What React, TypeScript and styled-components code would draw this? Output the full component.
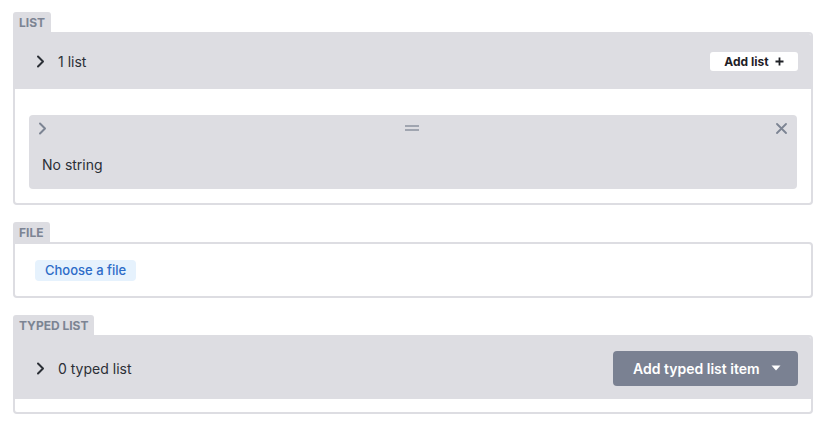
import React from 'react';
import styled, { createGlobalStyle } from 'styled-components';

const GlobalStyle = createGlobalStyle`
  *, *::before, *::after {
    box-sizing: border-box;
  }
  body {
    margin: 0;
    background: #ffffff;
    font-family: Inter, "Liberation Sans", sans-serif;
    color: #2b2f36;
  }
`

const Page = styled.div`
  width: 824px;
  padding: 12px 11px 0 13px;
  display: flex;
  flex-direction: column;
  gap: 17px;
`

const Field = styled.section`
  display: flex;
  flex-direction: column;
  align-items: flex-start;
`

const Tag = styled.div`
  height: 20px;
  padding: 0 6px;
  display: flex;
  align-items: center;
  background: #dddde2;
  border-radius: 3px 3px 0 0;
  font-size: 12px;
  font-weight: 700;
  color: #7c8493;
`

const Panel = styled.div`
  align-self: stretch;
  border: 2px solid #dddde2;
  border-radius: 0 4px 4px 4px;
  background: #ffffff;
  overflow: hidden;
`

const Header = styled.div<{ $height: number }>`
  height: ${p => p.$height}px;
  padding: 0 13px 0 21px;
  display: flex;
  align-items: center;
  gap: 13px;
  background: #dddde2;
  font-size: 14px;
`

const Count = styled.span`
  flex: 1;
  color: #2b2f36;
`

const Toggle = styled.span`
  width: 9px;
  height: 14px;
  display: flex;
  align-items: center;
  justify-content: center;
`

const AddListButton = styled.button`
  height: 19px;
  width: 88px;
  border: none;
  border-radius: 3px;
  background: #ffffff;
  display: flex;
  align-items: center;
  justify-content: center;
  gap: 6px;
  font-family: inherit;
  font-size: 12px;
  font-weight: 700;
  color: #1f2126;
`

const Body = styled.div`
  padding: 26px 14px 14px 14px;
`

const Item = styled.div`
  background: #dddde2;
  border-radius: 4px;
`

const ItemBar = styled.div`
  height: 26px;
  padding: 0 10px 0 9px;
  display: flex;
  align-items: center;
  justify-content: space-between;
`

const ItemValue = styled.div`
  padding: 14px 13px 14px 13px;
  font-size: 14px;
  line-height: 20px;
  color: #2b2f36;
`

const FileBody = styled.div`
  height: 52px;
  padding: 0 20px;
  display: flex;
  align-items: center;
`

const FileButton = styled.button`
  height: 21px;
  padding: 0 10px;
  border: none;
  border-radius: 4px;
  background: #e6f2fd;
  color: #2d6cc8;
  font-family: inherit;
  font-size: 13px;
  font-weight: 500;
`

const TypedButton = styled.button`
  height: 35px;
  width: 185px;
  padding: 0 17px 0 20px;
  border: none;
  border-radius: 4px;
  background: #7a8192;
  color: #ffffff;
  display: flex;
  align-items: center;
  justify-content: space-between;
  font-family: inherit;
  font-size: 14px;
  font-weight: 600;
`

const Spacer = styled.div`
  height: 13px;
`

const Chevron = ({ color = '#2b2f36' }: { color?: string }) => (
  <svg width="9" height="13" viewBox="0 0 9 13">
    <path d="M2 1.5 L7 6.5 L2 11.5" fill="none" stroke={color} strokeWidth="2" strokeLinecap="round" strokeLinejoin="round" />
  </svg>
)

const Plus = () => (
  <svg width="9" height="9" viewBox="0 0 9 9">
    <path d="M4.5 0.5 V8.5 M0.5 4.5 H8.5" stroke="#1f2126" strokeWidth="1.8" />
  </svg>
)

const Handle = () => (
  <svg width="14" height="6" viewBox="0 0 14 6">
    <path d="M0 1 H14 M0 5 H14" stroke="#8c93a0" strokeWidth="1.3" />
  </svg>
)

const Close = () => (
  <svg width="11" height="11" viewBox="0 0 11 11">
    <path d="M1 1 L10 10 M10 1 L1 10" stroke="#7c8493" strokeWidth="1.8" strokeLinecap="round" />
  </svg>
)

const Caret = () => (
  <svg width="10" height="6" viewBox="0 0 10 6">
    <path d="M0.5 0.5 H9.5 L5 5.5 Z" fill="#ffffff" />
  </svg>
)

const App = () => {
  return (
    <>
      <GlobalStyle />
      <Page>
        <Field>
          <Tag>LIST</Tag>
          <Panel>
            <Header $height={55}>
              <Toggle><Chevron /></Toggle>
              <Count>1 list</Count>
              <AddListButton>Add list <Plus /></AddListButton>
            </Header>
            <Body>
              <Item>
                <ItemBar>
                  <Chevron color="#7c8493" />
                  <Handle />
                  <Close />
                </ItemBar>
                <ItemValue>No string</ItemValue>
              </Item>
            </Body>
          </Panel>
        </Field>

        <Field>
          <Tag>FILE</Tag>
          <Panel>
            <FileBody>
              <FileButton>Choose a file</FileButton>
            </FileBody>
          </Panel>
        </Field>

        <Field>
          <Tag>TYPED LIST</Tag>
          <Panel>
            <Header $height={62}>
              <Toggle><Chevron /></Toggle>
              <Count>0 typed list</Count>
              <TypedButton>Add typed list item <Caret /></TypedButton>
            </Header>
            <Spacer />
          </Panel>
        </Field>
      </Page>
    </>
  );
};

export default App;
